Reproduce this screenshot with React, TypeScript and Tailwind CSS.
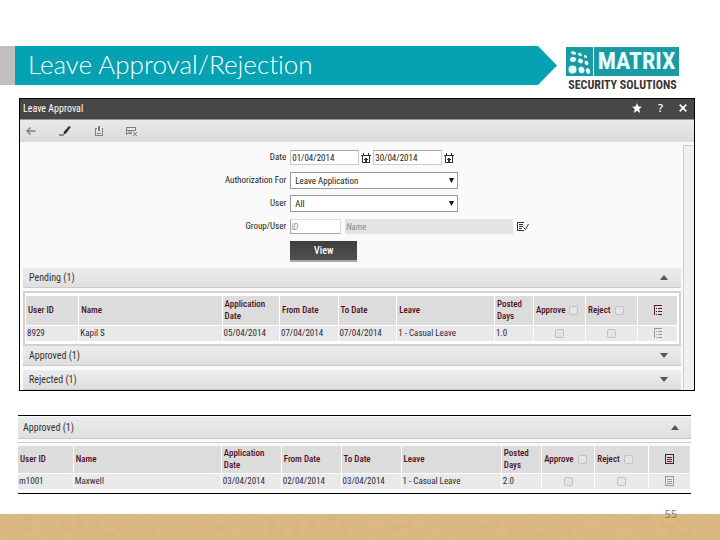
import type { ReactNode } from "react";

type Row = {
  id: string;
  name: string;
  applied: string;
  from: string;
  to: string;
  leave: string;
  days: string;
};

const pendingRows: Row[] = [
  { id: "8929", name: "Kapil S", applied: "05/04/2014", from: "07/04/2014", to: "07/04/2014", leave: "1 - Casual Leave", days: "1.0" },
];

const approvedRows: Row[] = [
  { id: "m1001", name: "Maxwell", applied: "03/04/2014", from: "02/04/2014", to: "03/04/2014", leave: "1 - Casual Leave", days: "2.0" },
];

function Logo() {
  return (
    <div className="flex w-[113px] flex-col items-center pt-px">
      <div className="flex h-[29px] w-full gap-px">
        <div className="w-[27px] bg-[#1a9ba3]">
          <svg viewBox="0 0 27 29" className="h-full w-full" fill="#e6ffff" aria-hidden="true">
            <ellipse cx="7.5" cy="6" rx="2.6" ry="1.5" transform="rotate(15 7.5 6)" />
            <ellipse cx="14" cy="7.5" rx="2.1" ry="1.4" transform="rotate(25 14 7.5)" />
            <ellipse cx="19.5" cy="9.5" rx="1.8" ry="1.3" transform="rotate(40 19.5 9.5)" />
            <ellipse cx="7" cy="12.5" rx="3" ry="2.4" />
            <ellipse cx="14.5" cy="14" rx="2.6" ry="2.2" transform="rotate(25 14.5 14)" />
            <ellipse cx="20.5" cy="16" rx="2.3" ry="1.8" transform="rotate(50 20.5 16)" />
            <circle cx="6.5" cy="22.5" r="4" />
            <ellipse cx="15.5" cy="23" rx="2.9" ry="3.3" transform="rotate(-15 15.5 23)" />
            <ellipse cx="22" cy="24" rx="2" ry="3" transform="rotate(-20 22 24)" />
          </svg>
        </div>
        <div className="flex flex-1 items-center justify-center bg-[#1a9ba3] text-[24px] leading-[29px] font-bold text-[#e6ffff]">
          MATRIX
        </div>
      </div>
      <div className="mt-[3px] text-[12px] leading-[13px] font-bold whitespace-nowrap text-[#3a3638]">
        SECURITY SOLUTIONS
      </div>
    </div>
  );
}

function CalendarIcon() {
  return (
    <svg viewBox="0 0 10 10" className="h-[10px] w-[10px]" fill="none" stroke="#333" shapeRendering="crispEdges" aria-hidden="true">
      <path d="M1.5 2.5h7v7h-7zM0 2.5h10M2.5 0v3M7.5 0v3M4.500 5v4M5.500 5v4M3 6.500h4" />
    </svg>
  );
}

function ListIcon({ color, boxed }: { color: string; boxed?: boolean }) {
  return (
    <svg viewBox="0 0 9 10" className="mx-auto block h-[10px] w-[9px]" fill="none" stroke={color} shapeRendering="crispEdges" aria-hidden="true">
      {boxed ? <path d="M.5.5h8v9h-8zM2 3.5h5M2 5.5h5M2 7.5h5" /> : <path d="M1.5 0v10M1 .5h8M3 3.5h1M5 3.5h4M3 6.5h1M5 6.5h4M3 9.5h1M5 9.5h4" />}
    </svg>
  );
}

function Arrow({ up }: { up?: boolean }) {
  return (
    <svg viewBox="0 0 8 5" className="h-[5px] w-[8px]" fill="#555" aria-hidden="true">
      {up ? <path d="M4 0 8 5H0z" /> : <path d="M0 0h8L4 5z" />}
    </svg>
  );
}

function SectionBar({ title, open, tall }: { title: string; open?: boolean; tall?: boolean }) {
  return (
    <button
      type="button"
      aria-expanded={!!open}
      className={`flex w-full items-center justify-between border-b border-[#cacaca] bg-linear-to-b from-[#ececec] to-[#dfdfdf] text-[10px] text-[#333] ${
        tall ? "h-[22px] pr-[12px] pl-[5px]" : "h-[20px] pr-[13px] pl-[6px]"
      }`}
    >
      <span>{title}</span>
      <Arrow up={open} />
    </button>
  );
}

function Check({ label }: { label: string }) {
  return (
    <input
      type="checkbox"
      aria-label={label}
      className="block h-[9px] w-[9px] shrink-0 appearance-none rounded-xs border border-[#c2c2c2] bg-[#e4e4e4]"
    />
  );
}

function LeaveTable({ rows, widths, boxed }: { rows: Row[]; widths: string[]; boxed?: boolean }) {
  const head = "border-r border-b border-white px-[2px] text-left font-medium";
  const cell = "border-r border-white px-px";
  return (
    <table className="w-full table-fixed border-collapse text-[9px] leading-[12px] whitespace-nowrap">
      <colgroup>
        {widths.map((w, i) => (
          <col key={i} style={{ width: w }} />
        ))}
      </colgroup>
      <thead>
        <tr className={`bg-[#dcdcdc] text-[#4f101c] ${boxed ? "h-[27px]" : "h-[29px]"}`}>
          <th scope="col" className={head}>User ID</th>
          <th scope="col" className={head}>Name</th>
          <th scope="col" className={head}>Application<br />Date</th>
          <th scope="col" className={head}>From Date</th>
          <th scope="col" className={head}>To Date</th>
          <th scope="col" className={head}>Leave</th>
          <th scope="col" className={head}>Posted<br />Days</th>
          <th scope="col" className={head}>
            <span className="flex items-center gap-[4px]">Approve <Check label="Approve all" /></span>
          </th>
          <th scope="col" className={head}>
            <span className="flex items-center gap-[4px]">Reject <Check label="Reject all" /></span>
          </th>
          <th scope="col" aria-label="Details" className={head}><ListIcon color="#5a1a26" boxed={boxed} /></th>
        </tr>
      </thead>
      <tbody>
        {rows.map((r) => (
          <tr key={r.id} className="h-[16px] bg-[#e9e9e9] text-[#2c2c38]">
            <td className={cell}>{r.id}</td>
            <td className={cell}>{r.name}</td>
            <td className={cell}>{r.applied}</td>
            <td className={cell}>{r.from}</td>
            <td className={cell}>{r.to}</td>
            <td className={cell}>{r.leave}</td>
            <td className={cell}>{r.days}</td>
            <td className={cell}><span className="flex justify-center"><Check label={`Approve ${r.name}`} /></span></td>
            <td className={cell}><span className="flex justify-center"><Check label={`Reject ${r.name}`} /></span></td>
            <td className={cell}><ListIcon color="#999" boxed={boxed} /></td>
          </tr>
        ))}
      </tbody>
    </table>
  );
}

function Field({ label, id, children }: { label: string; id: string; children: ReactNode }) {
  return (
    <div className="flex h-[17px] items-center gap-[4px]">
      <label htmlFor={id} className="w-[40%] text-right">{label}</label>
      {children}
    </div>
  );
}

function Select({ id, value }: { id: string; value: string }) {
  return (
    <div className="grid h-[17px] w-[168px] items-center">
      <select id={id} className="col-start-1 row-start-1 h-[17px] w-full appearance-none border border-[#999] bg-white pl-[4px] text-[9px] leading-[12px]">
        <option>{value}</option>
      </select>
      <svg viewBox="0 0 5 5" className="pointer-events-none col-start-1 row-start-1 mr-[4px] h-[5px] w-[5px] justify-self-end" fill="#111" aria-hidden="true">
        <path d="M0 0h5L2.500 5z" />
      </svg>
    </div>
  );
}

const dateBox = "h-[15px] w-[69px] border border-[#ccc] border-t-[#aaa] bg-white px-px text-[9px]";

export default function App() {
  return (
    <main className="flex min-h-screen flex-col bg-white font-['Roboto_Condensed','Liberation_Sans_Narrow','Open_Sans',sans-serif] text-[9px] text-[#222]">
      <header className="mt-[46px] flex h-[52px] items-start pr-[41px]">
        <div className="h-[39px] w-[15px] bg-[#bfbfbf]" />
        <div className="flex h-[39px] flex-1 items-center bg-[#04a2b3] pl-[13px] [clip-path:polygon(0_0,calc(100%-19px)_0,100%_50%,calc(100%-19px)_100%,0_100%)]">
          <h1 className="pb-[2px] font-['Lato','Open_Sans',sans-serif] text-[26px] leading-[37px] font-light whitespace-nowrap text-white [font-variant-ligatures:none]">
            Leave Approval/Rejection
          </h1>
        </div>
        <div className="ml-[9px]">
          <Logo />
        </div>
      </header>

      <section className="mr-[25px] ml-[19px] border border-black bg-[#fafafa]">
        <div className="flex h-[20px] items-center justify-between bg-[#474747] pr-[7px] pl-[3px] text-white">
          <h2 className="pb-[2px] text-[10px] font-normal">Leave Approval</h2>
          <div className="flex items-center gap-[14px] pb-[3px]">
            <button type="button" aria-label="Favourite">
              <svg viewBox="0 0 10 10" className="h-[10px] w-[10px]" fill="#fff">
                <path d="M5 0l1.400 3.500L10 3.800 7.200 6.100 8.200 10 5 7.700 1.800 10l1-3.900L0 3.800l3.600-.3z" />
              </svg>
            </button>
            <button type="button" className="w-[9px] font-['Open_Sans',sans-serif] text-[11px] leading-[12px] font-semibold">?</button>
            <button type="button" aria-label="Close">
              <svg viewBox="0 0 8 8" className="h-[8px] w-[8px]" stroke="#fff" strokeWidth="1.700">
                <path d="M.7.7l6.600 6.600M7.300.7L.7 7.300" />
              </svg>
            </button>
          </div>
        </div>
        <div className="flex h-[23px] items-center gap-[23px] border-t border-[#999] bg-linear-to-b from-[#e9e9e9] to-[#dcdcdc] pl-[6px]">
          <button type="button" aria-label="Back">
            <svg viewBox="0 0 10 10" className="h-[10px] w-[10px]" fill="none" stroke="#808080" strokeWidth="1.400">
              <path d="M9.500 5H1M4.500 1.500 1 5l3.500 3.500" />
            </svg>
          </button>
          <button type="button" aria-label="Edit">
            <svg viewBox="0 0 12 10" className="h-[10px] w-[12px]" fill="#333">
              <path d="M10 0l1.800 1L7.500 7 5 8.500 4.500 6zM0 8.600h5v1H0z" />
            </svg>
          </button>
          <button type="button" aria-label="Save">
            <svg viewBox="0 0 9 10" className="h-[10px] w-[9px]" fill="none" stroke="#808080" shapeRendering="crispEdges">
              <path d="M2.500 2.500h-1v7h7v-7h-1M4.500 0v5M5.500 0v5M3 7.500h4" />
            </svg>
          </button>
          <button type="button" aria-label="Clear">
            <svg viewBox="0 0 12 10" className="h-[10px] w-[12px]" fill="none" stroke="#808080">
              <path d="M0 1.500h10M.5 1v8M0 4.500h10M9.500 1v4M0 7.500h6M2 6h4M7 6l4 4M11 6l-4 4" />
            </svg>
          </button>
        </div>

        <div className="flex">
          <div className="min-w-0 flex-1 pr-[2px] pl-[3px]">
            <form className="flex flex-col gap-[6px] pt-[7px] pb-[6px]">
              <Field label="Date" id="from">
                <div className="flex items-center gap-[2px]">
                  <input id="from" className={dateBox} defaultValue="01/04/2014" />
                  <CalendarIcon />
                  <input aria-label="Date to" className={dateBox} defaultValue="30/04/2014" />
                  <CalendarIcon />
                </div>
              </Field>
              <Field label="Authorization For" id="auth">
                <Select id="auth" value="Leave Application" />
              </Field>
              <Field label="User" id="user">
                <Select id="user" value="All" />
              </Field>
              <Field label="Group/User" id="group">
                <input id="group" placeholder="ID" className="h-[15px] w-[51px] border border-[#ddd] border-b-[#b5a59c] border-l-[#b5a59c] bg-white text-[9px] italic placeholder:text-[#999]" />
                <input aria-label="Name" placeholder="Name" className="h-[15px] w-[168px] bg-[#e4e4e4] px-px text-[9px] italic placeholder:text-[#888]" />
                <svg viewBox="0 0 12 9" className="h-[9px] w-[12px]" fill="none" stroke="#333" aria-hidden="true">
                  <path d="M7 .5H.5v8H7M2 2.500h4M2 4.500h4M2 6.500h3M6.500 5.500l2 2L11.500 2" />
                </svg>
              </Field>
              <div className="flex gap-[4px]">
                <div className="w-[40%]" />
                <button type="button" className="h-[21px] w-[67px] border-b-2 border-[#aaa] bg-linear-to-b from-[#3e3e3e] to-[#505050] text-[10px] font-medium text-white">View</button>
              </div>
            </form>

            <SectionBar title="Pending (1)" open />
            <div className="mt-[3px] border-2 border-[#d8d0d0] bg-white px-px pt-[3px] pb-[3px]">
              <LeaveTable rows={pendingRows} widths={["8.1%", "22%", "8.8%", "9%", "9%", "15%", "6%", "8%", "8%", "6.1%"]} />
            </div>
            <SectionBar title="Approved (1)" />
            <div className="mt-[4px]">
              <SectionBar title="Rejected (1)" />
            </div>
          </div>
          <div className="mt-[3px] w-[11px] border-t border-l border-[#ccc] bg-[#f0f0f0]" />
        </div>
      </section>

      <section className="mt-[24px] mr-[29px] ml-[18px] border-y border-black bg-[#fafafa] pt-px pb-[4px]">
        <SectionBar title="Approved (1)" open tall />
        <div className="mt-[3px] border-t border-[#ccc] pt-[3px]">
          <LeaveTable boxed rows={approvedRows} widths={["8.2%", "22%", "8.900%", "8.900%", "8.900%", "14.900%", "6%", "7.900%", "8%", "6.200%"]} />
        </div>
      </section>

      <footer className="relative mt-auto h-[26px] bg-[#dcb983]">
        <svg className="block h-full w-full" aria-hidden="true">
          <filter id="kraft">
            <feTurbulence type="fractalNoise" baseFrequency="0.12" numOctaves="4" seed="4" />
            <feColorMatrix values="0 0 0 0 0.65  0 0 0 0 0.45  0 0 0 0 0.2  1.6 0 0 0 -0.6" />
          </filter>
          <rect width="100%" height="100%" filter="url(#kraft)" />
        </svg>
        <span className="absolute -top-[7px] right-[43px] font-['Open_Sans',sans-serif] text-[11px] leading-[14px] text-[#777]">55</span>
      </footer>
    </main>
  );
}
